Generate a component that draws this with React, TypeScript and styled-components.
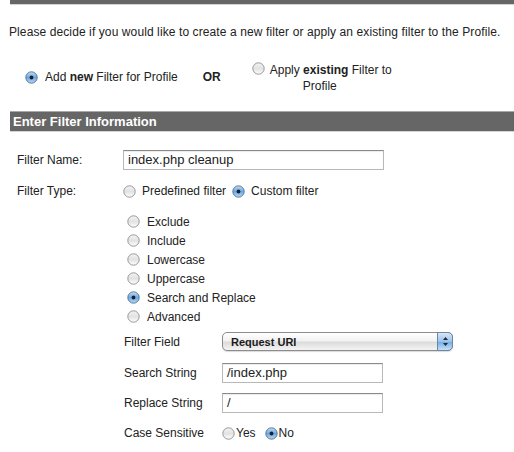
import React from "react";
import styled, { createGlobalStyle } from "styled-components";

const Global = createGlobalStyle`
  html, body { margin: 0; padding: 0; background: #fff; }
  body {
    font-family: "Liberation Sans", Arial, Helvetica, sans-serif;
    font-size: 12px;
    color: #222;
  }
`;

const Page = styled.div`
  width: 514px;
  height: 452px;
  overflow: hidden;
  display: flex;
  flex-direction: column;
`;

const SectionBar = styled.div<{ $tall?: boolean }>`
  margin-left: 10px;
  height: ${(p) => (p.$tall ? "19px" : "4px")};
  background: #666;
  border-top: ${(p) => (p.$tall ? "1px solid #a8a8a8" : "none")};
  border-bottom: 1px solid #d4d4d4;
  color: #fff;
  font-weight: bold;
  font-size: 13px;
  line-height: 19px;
  padding-left: 3px;
`;

const Intro = styled.p`
  margin: 20px 0 0 9px;
  line-height: 15px;
  letter-spacing: 0.1px;
  color: #222;
`;

const ChoiceRow = styled.div`
  display: flex;
  align-items: flex-start;
  margin: 21px 0 0 25px;
  height: 50px;
`;

const Choice = styled.label`
  display: flex;
  align-items: center;
  gap: 7px;
  line-height: 16px;
`;

const FirstChoice = styled(Choice)`
  margin-top: 8px;
`;

const Or = styled.span`
  font-weight: bold;
  margin: 8px 0 0 0;
  line-height: 16px;
  width: 49px;
  padding-left: 25px;
`;

const SecondChoice = styled.label`
  display: flex;
  align-items: flex-start;
  gap: 5px;
  line-height: 16px;
  margin-top: 1px;
`;

const Stacked = styled.span`
  display: block;
  width: 100px;
  text-align: center;
  white-space: nowrap;
  & > span { display: block; }
  & > span:first-child { text-align: left; }
`;

const Form = styled.div`
  display: grid;
  grid-template-columns: 106px 1fr;
  margin: 18px 0 0 17px;
`;

const Label = styled.div<{ $h: number }>`
  height: ${(p) => p.$h}px;
  display: flex;
  align-items: center;
`;

const Field = styled.div<{ $h: number }>`
  height: ${(p) => p.$h}px;
  display: flex;
  align-items: center;
  gap: 6px;
`;

const TextInput = styled.div<{ $w: number }>`
  box-sizing: border-box;
  width: ${(p) => p.$w}px;
  height: 20px;
  border: 1px solid #b8b8b8;
  border-top-color: #8a8a8a;
  background: #fff;
  font-size: 13px;
  line-height: 18px;
  padding-left: 4px;
  color: #222;
  box-shadow: inset 0 1px 1px rgba(0, 0, 0, 0.08);
`;

const Options = styled.div`
  grid-column: 2;
  display: flex;
  flex-direction: column;
  padding: 0 0 0 4px;
`;

const Option = styled.label`
  display: flex;
  align-items: center;
  gap: 7px;
  height: 19px;
`;

const SubForm = styled.div`
  grid-column: 1 / span 2;
  display: grid;
  grid-template-columns: 98px 1fr;
  margin: 0 0 0 107px;
`;

const Select = styled.div`
  box-sizing: border-box;
  width: 231px;
  height: 19px;
  border: 1px solid #8c8c8c;
  border-radius: 5px;
  background: linear-gradient(#ffffff, #f2f2f2 45%, #dcdcdc 55%, #f4f4f4);
  display: flex;
  align-items: center;
  font-weight: bold;
  font-size: 11px;
  color: #1a1a1a;
  padding-left: 8px;
  position: relative;
  box-shadow: 0 1px 1px rgba(0, 0, 0, 0.15);
`;

const Stepper = styled.span`
  position: absolute;
  right: -1px;
  top: -1px;
  width: 16px;
  height: 19px;
  border: 1px solid #6d86a6;
  border-radius: 0 5px 5px 0;
  background: linear-gradient(#d7e7f7, #9cc3ea 50%, #7aaee0 55%, #c6e0f8);
  box-sizing: border-box;
  display: flex;
  align-items: center;
  justify-content: center;
`;

const Small = styled.span`
  margin-left: -5px;
  margin-right: 3px;
`;

function Radio({ checked }: { checked?: boolean }) {
  const id = checked ? "rOn" : "rOff";
  return (
    <svg width="13" height="13" viewBox="0 0 13 13" style={{ flex: "none" }}>
      <defs>
        <linearGradient id="rOff" x1="0" y1="0" x2="0" y2="1">
          <stop offset="0" stopColor="#f4f4f4" />
          <stop offset="0.5" stopColor="#e2e2e2" />
          <stop offset="1" stopColor="#ffffff" />
        </linearGradient>
        <linearGradient id="rOn" x1="0" y1="0" x2="0" y2="1">
          <stop offset="0" stopColor="#c3dcf4" />
          <stop offset="0.5" stopColor="#6fa6dc" />
          <stop offset="1" stopColor="#b7d8f6" />
        </linearGradient>
      </defs>
      <circle
        cx="6.5"
        cy="6.5"
        r="5.7"
        fill={`url(#${id})`}
        stroke={checked ? "#4f6f95" : "#8d8d8d"}
        strokeWidth="0.9"
      />
      {checked && <circle cx="6.5" cy="6.5" r="1.9" fill="#15233a" />}
    </svg>
  );
}

function Arrows() {
  return (
    <svg width="7" height="11" viewBox="0 0 7 11">
      <path d="M3.5 1 L6 4 L1 4 Z" fill="#1c2a3e" />
      <path d="M3.5 10 L6 7 L1 7 Z" fill="#1c2a3e" />
    </svg>
  );
}

const filterKinds = [
  "Exclude",
  "Include",
  "Lowercase",
  "Uppercase",
  "Search and Replace",
  "Advanced",
];

export default function App() {
  return (
    <Page>
      <Global />
      <SectionBar />
      <Intro>
        Please decide if you would like to create a new filter or apply an existing filter to the Profile.
      </Intro>
      <ChoiceRow>
        <FirstChoice>
          <Radio checked />
          <span>
            Add <b>new</b> Filter for Profile
          </span>
        </FirstChoice>
        <Or>OR</Or>
        <SecondChoice>
          <Radio />
          <Stacked>
            <span>
              Apply <b>existing</b> Filter to
            </span>
            <span>Profile</span>
          </Stacked>
        </SecondChoice>
      </ChoiceRow>
      <SectionBar $tall>Enter Filter Information</SectionBar>
      <Form>
        <Label $h={20}>Filter Name:</Label>
        <Field $h={20}>
          <TextInput $w={261}>index.php cleanup</TextInput>
        </Field>
        <Label $h={42}>Filter Type:</Label>
        <Field $h={42}>
          <Radio />
          <span>Predefined filter</span>
          <Radio checked />
          <span>Custom filter</span>
        </Field>
        <Options>
          {filterKinds.map((k) => (
            <Option key={k}>
              <Radio checked={k === "Search and Replace"} />
              <span>{k}</span>
            </Option>
          ))}
        </Options>
        <SubForm>
          <Label $h={31}>Filter Field</Label>
          <Field $h={31}>
            <Select>
              Request URI
              <Stepper>
                <Arrows />
              </Stepper>
            </Select>
          </Field>
          <Label $h={31}>Search String</Label>
          <Field $h={31}>
            <TextInput $w={161}>/index.php</TextInput>
          </Field>
          <Label $h={30}>Replace String</Label>
          <Field $h={30}>
            <TextInput $w={161}>/</TextInput>
          </Field>
          <Label $h={30}>Case Sensitive</Label>
          <Field $h={30}>
            <Radio />
            <Small>Yes</Small>
            <Radio checked />
            <Small>No</Small>
          </Field>
        </SubForm>
      </Form>
    </Page>
  );
}
